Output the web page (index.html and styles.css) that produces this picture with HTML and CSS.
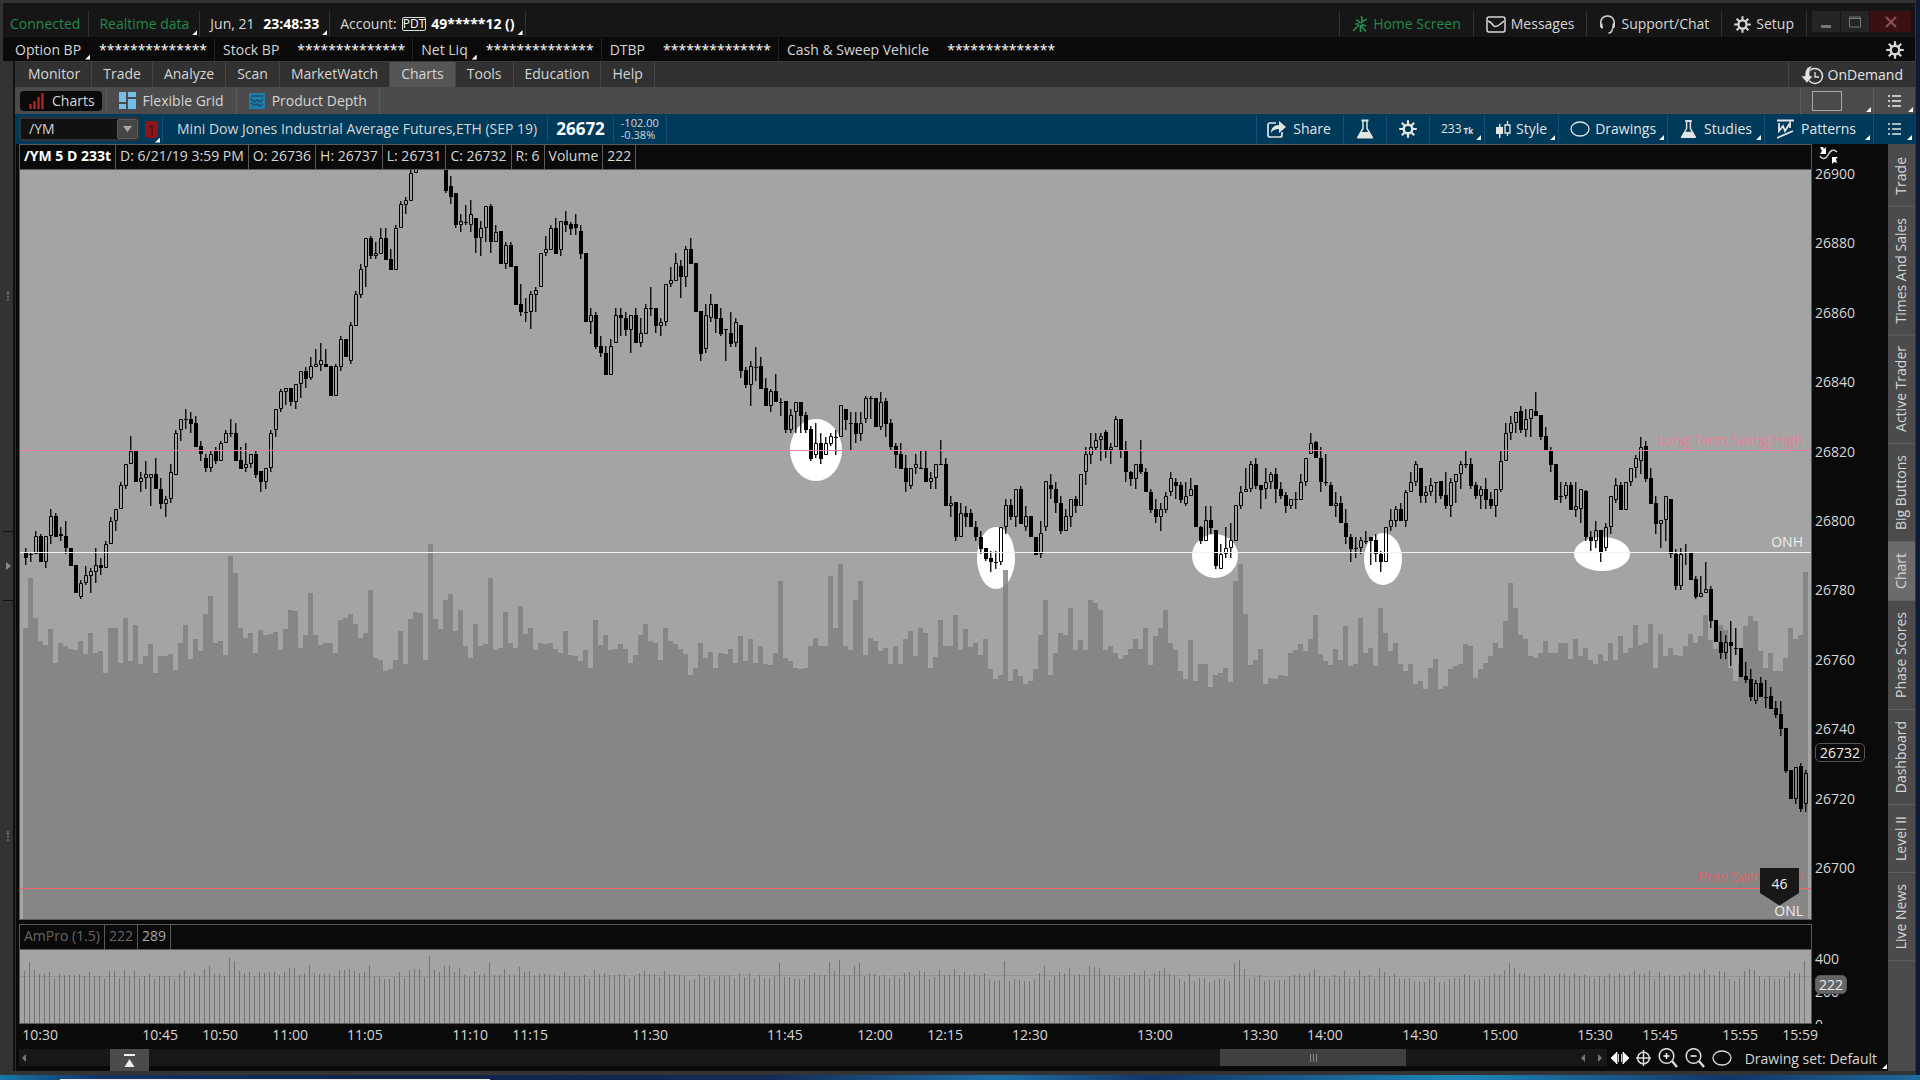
FILE: index.html
```html
<!DOCTYPE html>
<html lang="en">
<head>
<meta charset="utf-8">
<title>Charts - /YM</title>
<link rel="stylesheet" href="styles.css">
</head>
<body>
<svg class="defs" aria-hidden="true">
  <symbol id="i-gear" viewBox="0 0 18 18"><circle cx="9" cy="9" r="4.300" fill="none" stroke="currentColor" stroke-width="2.400"/><path d="M9 .2v4M9 13.800v4M.2 9h4M13.800 9h4M2.800 2.800l3 3M12.200 12.200l3 3M15.200 2.800l-3 3M5.800 12.200l-3 3" stroke="currentColor" stroke-width="2.200"/></symbol>
  <symbol id="i-flask" viewBox="0 0 18 20"><path d="M5.500.500h7v2h-7z" fill="currentColor"/><path d="M7 2v7.500L2 18h14L11 9.500V2" fill="none" stroke="currentColor" stroke-width="1.500"/><path d="M5 13h8l4 6.500H1z" fill="currentColor"/></symbol>
  <symbol id="i-list" viewBox="0 0 13 14"><path d="M4 2h9M4 7h9M4 12h9M0 2h2M0 7h2M0 12h2" stroke="currentColor" stroke-width="1.500"/></symbol>
  <symbol id="i-oval" viewBox="0 0 20 16"><ellipse cx="10" cy="8" rx="9" ry="7" fill="none" stroke="currentColor" stroke-width="1.300"/></symbol>
</svg>

<div class="window">
  <header class="title-bar">
    <div class="cell info first green">Connected</div>
    <div class="cell info green">Realtime data<i class="tri"></i></div>
    <div class="cell info">Jun, 21&nbsp; <b>23:48:33</b><i class="tri"></i></div>
    <div class="cell info">Account: <span class="pdt">PDT</span> <b>49*****12 ()</b><i class="tri"></i></div>
    <span class="grow"></span>
    <button class="cell line-left green"><svg width="16" height="18" viewBox="0 0 16 18"><path d="M9 1c1.500 2 1 5 .5 7M9 8.500c2-3 4-4 6-4M8 8C7 6 6 5 4 5M9.500 9.500l4.500 1.500M9 10.500l5 6M8.500 10v7M7 10l-6 6M7 9H3" fill="none" stroke="currentColor" stroke-width="1.700"/></svg>Home Screen</button>
    <button class="cell"><svg width="20" height="17" viewBox="0 0 20 17"><rect x="1" y="1" width="18" height="15" rx="2" fill="none" stroke="currentColor" stroke-width="1.500"/><path d="M2 5q3 1 5 4t6 0 5-4" fill="none" stroke="currentColor" stroke-width="1.500"/></svg>Messages</button>
    <button class="cell"><svg width="17" height="19" viewBox="0 0 17 19"><path d="M3.500 13C0 8 2 1 8.500 1s8.500 7 5 12.500M13.500 14q-1 4-4 4" fill="none" stroke="currentColor" stroke-width="1.500"/><path d="M1.500 8.500h2v5h-1l-1.500-2zM15.500 8.500h-2v5h1l1.500-2z" fill="currentColor"/></svg>Support/Chat</button>
    <button class="cell"><svg width="17" height="17"><use href="#i-gear"/></svg>Setup</button>
    <div class="win-buttons">
      <button aria-label="Minimize"><svg width="10" height="12"><path d="M0 10.500h10" stroke="#777" stroke-width="3"/></svg></button>
      <button aria-label="Maximize"><svg width="12" height="12"><path d="M.5 1h11v10H.5z M0 2.500h12" fill="none" stroke="#777"/></svg></button>
      <button class="close" aria-label="Close"><svg width="12" height="12"><path d="M1 1l10 10M11 1L1 11" stroke="#8b5555" stroke-width="2"/></svg></button>
    </div>
  </header>

  <div class="balances">
    <dl><dt>Option BP<i class="tri"></i></dt><dd>**************</dd></dl>
    <dl><dt>Stock BP</dt><dd>**************</dd></dl>
    <dl><dt>Net Liq<i class="tri"></i></dt><dd>**************</dd></dl>
    <dl><dt>DTBP</dt><dd>**************</dd></dl>
    <dl><dt>Cash &amp; Sweep Vehicle</dt><dd>**************</dd></dl>
    <span class="grow"></span>
    <button class="gear" aria-label="Settings"><svg width="18" height="18"><use href="#i-gear"/></svg></button>
  </div>

  <div class="shell">
    <aside class="gutter"><span>⁞</span><span class="mid"><svg width="5" height="8"><path d="M0 0l5 4-5 4z" fill="#8a8a8a"/></svg></span><span>⁞</span></aside>
    <div class="inner">
      <nav class="menu">
        <a href="#">Monitor</a><a href="#">Trade</a><a href="#">Analyze</a><a href="#">Scan</a><a href="#">MarketWatch</a><a href="#" class="on">Charts</a><a href="#">Tools</a><a href="#">Education</a><a href="#">Help</a>
        <span class="grow"></span>
        <a href="#" class="demand"><svg width="23" height="20" viewBox="0 0 23 20"><circle cx="14" cy="11" r="7.500" fill="none" stroke="currentColor" stroke-width="1.500"/><path d="M14 7v5h4" fill="none" stroke="currentColor" stroke-width="1.300"/><path d="M12 1C6 1 4 5 4 11H0l6 7 6-7H9C8 7 9 3 12 1z" fill="currentColor" stroke="#313131" stroke-width=".6"/></svg>OnDemand</a>
      </nav>

      <nav class="subtabs">
        <a href="#" class="pill"><svg width="16" height="16"><path d="M1.500 11v5M5.500 8v8M9.500 4v12M13.500 0v16" stroke="#b22a2a" stroke-width="2.200"/></svg>Charts</a>
        <a href="#"><svg width="17" height="17"><path d="M0 0h7v10H0zM9 0h8v5H9zM0 12h7v5H0zM9 7h8v10H9z" fill="#76bdea"/></svg>Flexible Grid</a>
        <a href="#"><svg width="16" height="16"><path d="M0 0h16v16H0z" fill="#1c7db0"/><path d="M2 3h12M2 6l3 3 3-2 3 2 3-3M2 10l3 2 3-1 3 2 3-2" fill="none" stroke="#234a60" stroke-width="1.500"/></svg>Product Depth</a>
        <span class="grow"></span>
        <button class="layout" aria-label="Grid layout"><span></span><i class="tri"></i></button>
        <button class="listbtn" aria-label="Menu"><svg width="13" height="14"><use href="#i-list"/></svg><i class="tri"></i></button>
      </nav>

      <div class="symbol-bar">
        <div class="combo"><input type="text" value="/YM" aria-label="Symbol"><button aria-label="Symbol list"><svg width="9" height="6"><path d="M0 0h9L4.500 6z" fill="#aaa"/></svg></button></div>
        <button class="link">1<i class="tri"></i></button>
        <div class="name">Mini Dow Jones Industrial Average Futures,ETH (SEP 19)</div>
        <div class="last">26672</div>
        <div class="change"><span>-102.00</span><span>-0.38%</span></div>
        <span class="grow"></span>
        <button class="tool share"><svg width="19" height="18" viewBox="0 0 19 18"><path d="M9 3H3a2 2 0 0 0-2 2v10a2 2 0 0 0 2 2h10a2 2 0 0 0 2-2v-3" fill="none" stroke="currentColor" stroke-width="1.700"/><path d="M4 13c0-5 3-8 8-8V1l7 6-7 6V9c-4 0-6 1-8 4z" fill="currentColor"/></svg>Share</button>
        <button class="tool" aria-label="Edit studies"><svg width="18" height="20"><use href="#i-flask"/></svg></button>
        <button class="tool" aria-label="Chart settings"><svg width="18" height="18"><use href="#i-gear"/></svg></button>
        <button class="tool ticks">233<small>Tk</small><i class="tri"></i></button>
        <button class="tool tight"><svg width="15" height="17" viewBox="0 0 15 17"><path d="M0 6h7v7H0zM3 3h1.500v14H3z" fill="currentColor"/><path d="M9 4h5v8H9zM11.500 0v4M11.500 12v3" fill="none" stroke="currentColor" stroke-width="1.300"/></svg>Style<i class="tri"></i></button>
        <button class="tool tight"><svg width="20" height="16"><use href="#i-oval"/></svg>Drawings<i class="tri"></i></button>
        <button class="tool"><svg width="17" height="20"><use href="#i-flask"/></svg>Studies<i class="tri"></i></button>
        <button class="tool patterns"><svg width="17" height="20" viewBox="0 0 17 20"><path d="M0 1.500h17" stroke="currentColor" stroke-width="2"/><path d="M2 4v8l4-5 2 5 5-8v5M0 19l16-7" fill="none" stroke="currentColor" stroke-width="1.800"/></svg>Patterns<i class="tri"></i></button>
        <button class="tool listbtn" aria-label="Menu"><svg width="13" height="14"><use href="#i-list"/></svg><i class="tri"></i></button>
      </div>

      <div class="work">
        <main class="charts">
          <section class="pane upper">
            <div class="frame">
              <div class="readout"><b>/YM 5 D 233t</b><span>D: 6/21/19 3:59 PM</span><span>O: 26736</span><span>H: 26737</span><span>L: 26731</span><span>C: 26732</span><span>R: 6</span><span>Volume</span><span>222</span></div>
              <div class="plot">
                <svg id="price" viewBox="20 170 1791 749" preserveAspectRatio="none"></svg>
                <span class="label high">Long Term Swing High</span>
                <span class="label onh">ONH</span>
                <span class="label prev">Prev Swing High</span>
                <span class="label onl">ONL</span>
                <span class="flag">46</span>
              </div>
            </div>
            <div class="axis">
              <svg width="19" height="20" viewBox="0 0 19 20"><path d="M1 12c2 4 6 3 8-1s5-7 9-3" fill="none" stroke="#ddd" stroke-width="1.400"/><path d="M1 3l3 0 1 2 2-2v7H1l2-3zM18 19l-3-1-2 2v-7h6l-2 2z" fill="#fff"/></svg>
              <ol><li>26900</li><li>26880</li><li>26860</li><li>26840</li><li>26820</li><li>26800</li><li>26780</li><li>26760</li><li>26740</li><li>26720</li><li>26700</li></ol>
              <span class="tag price-tag">26732</span>
            </div>
          </section>

          <section class="pane lower">
            <div class="frame">
              <div class="readout dim"><span>AmPro (1.5)</span><span>222</span><span class="lit">289</span></div>
              <div class="plot"><svg id="volume" viewBox="20 950 1791 73" preserveAspectRatio="none"></svg></div>
            </div>
            <div class="axis small-axis"><ol><li>400</li><li>200</li><li>0</li></ol><span class="tag vol-tag">222</span></div>
          </section>

          <div class="times" id="times"></div>

          <footer class="scroll">
            <div class="track">
              <svg class="arrow" width="4" height="8"><path d="M4 0v8L0 4z" fill="#777"/></svg>
              <button class="expand" aria-label="Expand"><svg width="11" height="15"><path d="M0 1h11v2H0zM5.500 6l5 8H.5z" fill="#eee"/></svg></button>
              <span class="gap-a"></span>
              <span class="thumb"><svg width="7" height="8"><path d="M.5 0v8M3.500 0v8M6.500 0v8" stroke="#888"/></svg></span>
              <span class="gap-b"></span>
              <svg width="21" height="8"><path d="M4 0v8L0 4zM17 0v8l4-4z" fill="#777"/></svg>
            </div>
            <div class="icons">
              <button aria-label="Fit width"><svg width="18" height="14"><path d="M6 1v12L0 7zM12 1v12l6-6zM7.500 3v8M10.500 3v8" fill="#fff" stroke="#fff" stroke-width=".8"/></svg></button>
              <button aria-label="Crosshair"><svg width="15" height="16"><path d="M7.500 0v16M0 8h15" stroke="#ddd" stroke-width="1.500"/><circle cx="7.500" cy="8" r="5.800" fill="none" stroke="#ddd" stroke-width="1.500"/></svg></button>
              <button aria-label="Zoom in"><svg width="20" height="20"><circle cx="8.500" cy="8" r="7.300" fill="none" stroke="#ddd" stroke-width="1.500"/><path d="M14 13l5 6" stroke="#ddd" stroke-width="2.400"/><path d="M5.500 8h6M8.500 5v6" stroke="#fff" stroke-width="1.500"/></svg></button>
              <button aria-label="Zoom out"><svg width="20" height="20"><circle cx="8.500" cy="8" r="7.300" fill="none" stroke="#ddd" stroke-width="1.500"/><path d="M14 13l5 6" stroke="#ddd" stroke-width="2.400"/><path d="M5.500 8h6" stroke="#fff" stroke-width="1.500"/></svg></button>
              <button aria-label="Ellipse"><svg width="20" height="16"><use href="#i-oval"/></svg></button>
            </div>
            <button class="drawing-set">Drawing set: Default<i class="tri"></i></button>
          </footer>
        </main>

        <nav class="side"><a href="#">Trade</a><a href="#">Times And Sales</a><a href="#">Active Trader</a><a href="#">Big Buttons</a><a href="#" class="on">Chart</a><a href="#">Phase Scores</a><a href="#">Dashboard</a><a href="#">Level II</a><a href="#">Live News</a></nav>
      </div>
    </div>
  </div>
</div>
<div class="desktop"></div>
<script src="chart.js"></script>
</body>
</html>
```
FILE: styles.css
```css
* { box-sizing: border-box; }
body {
  margin: 0;
  height: 100vh;
  min-height: 600px;
  display: flex;
  flex-direction: column;
  background: #0c1c38;
  color: #d6d6d6;
  font: 14px/20px "Open Sans", "Noto Sans", sans-serif;
  white-space: nowrap;
  overflow: hidden;
}
button, input { font: inherit; color: inherit; background: none; border: 0; padding: 0; margin: 0; }
a { color: inherit; text-decoration: none; }
svg { flex: none; display: block; }
.defs { position: absolute; width: 0; height: 0; }
.grow { flex: 1; }
b { color: #fff; }
.tri {
  position: absolute;
  right: 2px;
  bottom: 2px;
  width: 5px;
  height: 5px;
  background: #fff;
  clip-path: polygon(100% 0, 100% 100%, 0 100%);
}

.window {
  flex: 1;
  min-height: 0;
  display: flex;
  flex-direction: column;
  margin-right: 4px;
  background: #161616;
  border: solid #333;
  border-width: 3px 1px 4px 3px;
}

.title-bar { display: flex; height: 34px; padding-top: 8px; background: #161616; }
.cell {
  position: relative;
  display: flex;
  align-items: center;
  gap: 5px;
  padding: 0 12px;
  border-right: 1px solid #333;
}
.cell.info { padding: 0 10px; }
.cell.first { padding: 0 8px 0 7px; }
.cell.line-left { border-left: 1px solid #333; }
.green { color: #23894f; }
.pdt { border: 1px solid #ddd; border-radius: 2px; font-size: 12px; line-height: 12px; color: #fff; }
.win-buttons { display: flex; gap: 1px; padding: 0 4px 5px 5px; }
.win-buttons button { width: 28px; background: #252525; display: flex; align-items: center; justify-content: center; }
.win-buttons .close { width: 41px; background: #3a1012; }

.balances { display: flex; height: 24px; background: #0a0a0a; padding: 1px 0 0 4px; }
dl { display: flex; align-items: center; margin: 0; padding: 0 7px 0 8px; border-right: 1px solid #222; gap: 18px; }
dl:nth-of-type(5) { border: 0; }
dt { position: relative; }
dt .tri { right: -9px; bottom: 0; }
dd { margin: 0; color: #fff; }
.gear { width: 24px; margin-right: 5px; }

.shell { flex: 1; min-height: 0; display: flex; }
.gutter {
  width: 12px;
  background: #333;
  border-right: 2px solid #111;
  display: flex;
  flex-direction: column;
  color: #777;
}
.gutter span { flex: 1; display: flex; align-items: center; justify-content: center; }
.gutter .mid { flex: 0 0 70px; border: solid #111; border-width: 1px 0; }
.inner { flex: 1; min-width: 0; display: flex; flex-direction: column; }

.menu { display: flex; height: 26px; background: #313131; border-top: 1px solid #3a3a3a; padding-left: 2px; }
.menu a { padding: 2px 11px; border-right: 1px solid #454545; }
.menu .on { background: #555; }
.menu .demand { display: flex; align-items: center; gap: 4px; padding: 0 12px; border: 0; border-left: 1px solid #454545; color: #e4e4e4; }

.subtabs { display: flex; height: 27px; background: #4b4b4b; align-items: center; padding-left: 5px; }
.subtabs a { display: flex; align-items: center; gap: 7px; height: 27px; padding: 0 12px; border-right: 1px solid #5c5c5c; }
.subtabs .pill { height: 20px; padding: 0 7px 0 9px; margin-right: 4px; border: 0; border-radius: 4px; background: #0a0a0a; }
.subtabs .pill + a { border-left: 1px solid #5c5c5c; }
.layout { position: relative; width: 73px; height: 27px; border-left: 1px solid #5c5c5c; padding-left: 11px; }
.layout span { display: block; width: 30px; height: 20px; border: 1px solid #aaa; }
.listbtn { position: relative; width: 42px; height: 27px; border-left: 1px solid #5c5c5c; padding-left: 14px; color: #eee; }

.symbol-bar { display: flex; height: 30px; background: #003a5a; align-items: center; padding-left: 4px; }
.combo { display: flex; width: 121px; height: 24px; background: #111; border: 2px solid #333; border-radius: 3px; }
.combo input { flex: 1; width: 60px; padding-left: 8px; outline: 0; }
.combo button { width: 21px; background: #454545; border: 1px solid #5a5a5a; border-radius: 2px; display: flex; align-items: center; justify-content: center; }
.link { position: relative; width: 13px; height: 17px; margin: 0 4px 0 5px; border-radius: 3px; background: #8c1519; color: #3a1012; line-height: 17px; }
.link .tri { right: -2px; bottom: -5px; }
.name { padding: 3px 10px 3px 14px; border: solid #14507a; border-width: 0 1px; }
.last { padding: 3px 8px; font-size: 17px; font-weight: bold; color: #fff; border-right: 1px solid #14507a; }
.change { display: flex; flex-direction: column; padding: 2px 7px; font-size: 11px; line-height: 12px; border-right: 1px solid #14507a; }
.tool { position: relative; display: flex; align-items: center; gap: 7px; height: 28px; padding: 0 12px; border-left: 1px solid #14507a; color: #e4e4e4; }
.tool .tri { right: 3px; bottom: 3px; }
.tool.share { padding: 0 12px 0 10px; }
.tool.tight { gap: 5px; padding: 0 11px; }
.tool.patterns { padding: 0 17px 0 12px; }
.tool.ticks { gap: 2px; font-size: 12px; padding: 0 11px; }
.ticks small { font-size: 8px; font-weight: bold; padding-top: 3px; }
.tool.listbtn { padding-left: 14px; }

.work { flex: 1; min-height: 0; display: flex; border-left: 1px solid #003a5a; background: #0a0a0a; }
.charts { flex: 1; min-width: 0; display: flex; flex-direction: column; padding-left: 3px; }
.pane { display: flex; }
.upper { flex: 1; min-height: 0; }
.lower { height: 100px; margin-top: 4px; }
.frame { flex: 1; min-width: 0; display: flex; flex-direction: column; border: 1px solid #5a5a5a; }
.readout { display: flex; height: 25px; border-bottom: 1px solid #5a5a5a; }
.readout > * { padding: 1px 4px; border-right: 1px solid #5a5a5a; }
.dim { color: #666; }
.lit { color: #a8a8a8; }
.plot { position: relative; flex: 1; min-height: 0; background: #a4a4a4; }
.plot > svg { width: 100%; height: 100%; }
.volume { fill: #7e7e7e; fill-opacity: .8; }
.body-up { fill: none; stroke: #000; }
.label { position: absolute; right: 8px; transform: translateY(-50%); }
.high { top: 36%; color: #e87f97; }
.onh { top: 50%; color: #eee; margin-top: -3px; }
.prev { top: 94%; color: #e0656a; margin-top: 3px; }
.onl { top: 99%; color: #eee; margin-top: -1px; }
.flag {
  position: absolute;
  right: 12px;
  top: 93%;
  width: 39px;
  height: 38px;
  margin-top: 1px;
  padding: 6px 0;
  text-align: center;
  color: #eee;
  background: #181818;
  clip-path: polygon(0 0, 100% 0, 100% 67%, 50% 100%, 0 67%);
}
.axis { position: relative; width: 76px; padding-left: 3px; display: flex; flex-direction: column; }
.axis > svg { margin-left: 4px; }
.axis ol { list-style: none; margin: 0; padding: 0; flex: 1; display: flex; flex-direction: column; justify-content: space-between; }
.upper ol { margin-bottom: 42px; }
.tag { position: absolute; left: 3px; padding: 0 4px; line-height: 17px; border: 1px solid #555; border-radius: 5px; background: #0a0a0a; color: #eee; }
.price-tag { top: 78%; margin-top: -6px; }
.small-axis { overflow: hidden; padding-top: 25px; }
.small-axis ol { margin-bottom: -11px; }
.vol-tag { top: 51px; background: #666; padding: 0 3px; }

.times { position: relative; height: 25px; margin: 0 77px 0 1px; }
.times span { position: absolute; top: 1px; transform: translateX(-50%); }

.scroll { display: flex; height: 22px; }
.track { flex: 1; height: 17px; display: flex; align-items: center; background: #181818; padding: 0 5px 0 3px; }
.expand { width: 39px; height: 22px; margin: 0 0 -5px 84px; background: #4b4b4b; display: flex; align-items: center; justify-content: center; }
.gap-a { flex: 1069; }
.thumb { flex: 186; height: 17px; background: #404040; display: flex; align-items: center; justify-content: center; }
.gap-b { flex: 174; }
.icons { display: flex; align-items: center; gap: 7px; padding-left: 4px; height: 18px; color: #ddd; }
.drawing-set { position: relative; padding: 0 11px 0 13px; height: 20px; line-height: 18px; }
.drawing-set .tri { right: 1px; bottom: 0; }

.side { width: 27px; background: #4b4b4b; display: flex; flex-direction: column; padding-top: 2px; }
.side a { writing-mode: vertical-rl; transform: rotate(180deg); line-height: 26px; padding: 11px 0; border-top: 1px solid #626262; }
.side .on { background: #6b6b6b; }

.desktop { height: 5px; background: linear-gradient(90deg, transparent 60px, #eee 60px 490px, transparent 490px) 0 4px / 100% 1px no-repeat, linear-gradient(90deg, #1677a8, #123468 5%, #0f2347 20%, #142a55 40%, #1c6fa8 52%, #123468 60%, #1d86b8 76%, #123468 90%, #1d6a9c); }
```
FILE: chart.js
```js
// Each run of candles: top offset, vertical units per pixel, then high,bodyTop,bodyBottom,low + up/down.
const runs = [
[160, 2.8, `1087,1101,1115,1135d 1097,1104,1104,1125d 1038,1053,1104,1104u 1047,1053,1126,1126d 1053,1053,1126,1142u 978,998,1053,1076u 988,998,1055,1055d 1028,1046,1054,1066d 1010,1054,1087,1102d 1086,1086,1136,1136d
1135,1135,1213,1213d 1175,1184,1224,1230u 1136,1163,1185,1191u 1142,1152,1164,1212u 1087,1135,1153,1184u 1115,1134,1143,1163d 1066,1076,1143,1143u 999,1010,1076,1076u 978,978,1010,1038u 902,911,978,978u
852,852,912,921u 774,815,852,852u 815,815,902,902d 874,890,902,930u 842,880,891,921u 880,880,891,968u 834,880,922,922d 891,921,962,978d 940,950,962,999u 852,873,950,960u
755,765,881,881u 726,726,755,786u 698,726,726,754d 706,725,738,764d 716,736,804,804d 786,802,824,842d 824,833,863,874d 815,824,863,873u 804,815,844,850d 786,793,843,843u
755,765,793,793u 726,765,765,776d 736,765,843,843d 804,841,864,864d 793,852,863,873u 824,824,852,863u 815,824,881,890d 872,872,902,930d 863,863,902,922u 755,765,863,873u
698,698,755,775u 640,648,698,706u 638,638,650,687u 638,638,678,688d 628,628,678,698u 590,590,628,667u 580,590,612,638d 552,578,611,617u 530,571,579,579u 513,561,573,590u
530,572,580,580d 578,578,660,660d 572,578,660,660u 492,501,579,590u 501,501,552,552d 454,463,562,571u 367,376,464,464u 290,305,377,386u 219,219,300,355u 212,218,269,278d
230,261,269,278u 190,219,262,262u 190,218,279,279d 250,278,307,307d 181,190,307,307u 115,124,191,191u 104,113,125,151u 28,37,114,114u -20,0,37,37u -60,-60,0,0u
-80,-80,-30,-30u -80,-80,-30,-30d -80,-80,-30,-30u -60,-60,0,0d 0,0,87,92d 44,74,104,124d 91,91,182,191d 151,172,181,201u 125,173,173,181d 113,152,181,201u
162,162,219,260d 172,190,219,268u 130,130,191,230u 123,130,230,260d 181,201,230,230u 200,200,290,290d 230,239,290,305u 230,239,300,300d 298,298,405,405d 348,403,426,436d
386,425,425,453d 367,376,426,473u 356,365,377,425u 260,260,355,355u 212,250,261,268u 181,190,251,251u 162,190,262,262d 172,172,251,268u 142,172,181,201d 173,178,192,210d
152,179,191,210d 181,200,262,278d 260,260,454,454d 415,435,454,486u 425,435,523,530d 492,522,541,552d 522,540,601,601d 502,522,601,601u 415,435,513,513u 415,434,443,492d
425,442,475,492d 435,435,475,540u 415,435,513,513d 443,485,513,523u 404,414,486,486u 355,415,415,436d 415,415,464,483d 443,453,464,492u 348,348,454,464u 299,337,348,355u
261,289,338,338u 280,298,328,386d 240,249,327,355u 219,249,290,290d 288,288,426,426d 424,424,542,562d 404,435,530,540u 376,404,443,453u 403,403,444,484d 415,442,486,492d
474,474,474,562d 425,484,514,523d 443,453,513,523u 463,463,590,610d 580,588,630,638d 562,578,629,688u 523,579,579,618d 552,578,640,640d 610,638,688,688d 640,648,688,706u
600,648,678,678d 667,678,678,716d 676,676,755,765d 698,715,755,765u 677,677,706,765u 677,677,716,763d 706,714,756,763d 745,753,836,842d 736,793,825,834u 765,792,836,852d
775,793,825,825u 765,774,794,802u 755,775,775,825d 687,687,775,775u 696,696,727,755d 706,737,737,813d 706,736,766,792d 706,736,766,786u 660,667,726,736u 660,667,667,726d
665,665,748,748d 649,677,748,755u 667,676,738,775d 726,735,804,813d 793,802,825,862d 793,823,864,864d 825,862,902,930d 862,862,912,921u 824,852,862,880u 815,862,862,862d
815,862,902,902d 873,890,902,921u 852,852,890,921u`],
[380, 3, `181,253,253,253d 235,252,378,378d 347,369,377,410u 367,367,472,482d 369,399,472,472u 378,398,412,441d 388,398,442,442d 422,440,472,482d 452,470,506,523d 503,503,536,544d
514,534,546,576d 514,546,546,566d 440,440,546,556u 358,376,442,462u 358,375,412,420d 327,327,410,441u 317,327,431,431d 378,409,442,452u 408,408,472,472d 470,470,524,524d
422,458,523,535u 304,304,440,452u 283,315,328,358d 306,327,370,398d 347,368,453,462d 388,409,452,452u 358,358,410,440u 347,357,378,398d 283,283,378,378u 202,223,276,316u
160,200,224,253u 160,181,203,210u 160,169,181,242u 150,157,213,235d 190,201,211,253u 107,118,202,202u 116,116,213,235d 182,212,276,306d 274,275,296,317d 253,253,296,327u
181,252,277,283d 265,275,337,337d 327,335,390,398d 358,388,412,430d 368,388,412,452u 337,347,389,398u 275,294,337,347u 294,305,318,357d 306,316,360,368d 305,347,371,377u
294,326,347,347u 316,316,442,442d 438,440,484,493d 377,420,482,482u 377,420,444,462d 451,451,558,566d 493,523,566,566u 441,504,523,535u 430,480,504,535u 376,376,482,482u
317,335,377,388u 265,327,335,335u 243,253,328,335u 235,252,318,327d 316,316,329,388d 265,306,328,358u 275,283,307,327u 265,282,328,368d 307,327,347,358d 335,346,378,398d
358,358,378,388u 336,358,358,388d 283,305,359,359u 234,234,307,317u 158,188,223,223u 182,187,235,235d 202,233,307,335d 223,306,306,317d 307,316,378,378d 335,368,378,410u
347,368,430,430d 388,428,472,493d 462,470,506,546d 470,505,505,535d 470,481,505,523u 452,482,482,493d 470,470,483,556d 462,480,523,546d 513,523,546,576d 440,440,546,546u
388,420,441,452u 377,388,422,440u 368,387,423,423d 329,335,422,440u 276,305,336,336u 243,253,305,317u 263,263,347,368d 317,335,347,368u 294,316,337,347u 305,305,305,368d
304,304,347,358d 275,345,378,388d 295,305,378,410u 283,283,307,368u 243,253,283,327u 212,253,253,264d 235,252,318,327d 307,316,348,357d 317,327,347,388u 294,327,360,388d
337,358,378,388d 327,327,378,410u 212,242,329,335u 128,159,242,242u 108,129,159,181u 95,95,130,158u 77,94,150,158d 88,118,150,170u 88,88,118,170u 36,94,108,108d
106,106,171,181d 140,168,212,212d 202,212,254,275d 252,252,359,359d 306,347,347,368d 305,316,347,358u 306,316,390,390d 307,377,389,410u 328,328,388,430u 329,334,472,482d
452,470,483,514d 422,451,482,504u 451,451,518,546d 430,440,505,514u 347,347,441,462u 294,316,359,368u 306,316,389,389d 307,307,389,389u 264,264,307,318u 224,235,265,293u
171,200,242,283u 182,199,296,306d 264,293,371,371d 347,368,431,462d 420,421,431,504u 347,347,421,482u 357,357,523,535d 506,521,619,629d 504,523,617,629u 493,516,516,556d
515,515,599,599d 588,597,652,658d 588,639,651,651u 546,627,640,640u 618,627,723,744d 721,721,787,787d 753,786,818,838d 764,786,818,838u 722,785,797,857d 744,805,805,826d
803,803,892,892d 846,889,900,909d 868,897,952,962d 899,909,962,972u 891,908,952,952d 899,951,951,984d 921,949,986,986d 962,983,1005,1014d 962,1002,1046,1067d 1043,1043,1173,1178d
1171,1171,1256,1256d 1160,1160,1256,1273u 1150,1159,1286,1295d 1170,1179,1273,1295u`]
];

// Volume bar tops, one per candle.
const volumeRuns = [
[160, 2.8, `1309 1169 1281 1348 1358 1313 1408 1352 1362 1369 1372 1348 1383 1324 1379 1376 1436 1309 1309 1408 1281 1404 1303 1411 1390 1355 1436 1390 1390 1383 1429 1352 1303 1397 1341 1376 1270 1222 1352 1348
1387 1110 1155 1309 1338 1324 1380 1317 1330 1327 1321 1373 1313 1261 1264 1366 1331 1211 1331 1359 1352 1352 1380 1289 1282 1271 1299 1338 1324 1205 1393 1401 1432 1425 1401 1320 1411 1285 1265 1268
1401 1075 1285 1313 1233 1215 1320 1261 1362 1393 1299 1362 1355 1169 1372 1366 1265 1352 1366 1250 1327 1309 1372 1352 1355 1352 1369 1380 1320 1387 1390 1404 1373 1421 1289 1358 1331 1373 1369 1355
1369 1408 1387 1331 1299 1348 1352 1401 1309 1348 1355 1369 1383 1442 1421 1352 1393 1377 1421 1380 1383 1369 1408 1334 1404 1341 1408 1362 1411 1414 1380 1180 1393 1404 1421 1425 1421 1362 1338 1362
1362 1166 1309 1131 1362 1373 1233 1180 1387 1338 1348 1376 1366 1411 1362 1411 1341 1320 1390 1309`],
[380, 3, `758 863 832 720 799 799 705 810 747 802 788 825 777 867 896 885 570 904 867 889 911 904 867 766 660 885 818 758 766 683 810 780 810 660 668 690 810 799 818
837 825 807 777 807 743 855 769 743 690 788 810 874 896 780 904 852 852 922 885 878 863 907 604 552 702 855 840 807 911 893 896 885 889 818 810 792 813 777 705
821 844 855 807 840 739 859 851 713 818 803 859 683 758 814 788 852 874 852 911 904 926 863 837 926 919 867 859 852 792 799 893 867 848 829 788 803 724 608 683
766 777 829 833 818 784 818 818 788 788 837 777 829 803 840 852 822 844 788 840 769 818 803 735 795 788 732 863 762 829 803 825 829 799 762 788 769 705 780 806
735 750 863 904 852 739 709 724 814 863 818 874 874 833 743 777 766 577`]
];

const marks = [[816, 450, 26, 31], [996, 558, 19, 31], [1215, 556, 23, 22], [1383, 559, 19, 26], [1602, 554, 28, 17]];
const times = { "10:30": 40, "10:45": 160, "10:50": 220, "11:00": 290, "11:05": 365, "11:10": 470, "11:15": 530, "11:30": 650, "11:45": 785, "12:00": 875, "12:15": 945, "12:30": 1030, "13:00": 1155, "13:30": 1260, "14:00": 1325, "14:30": 1420, "15:00": 1500, "15:30": 1595, "15:45": 1660, "15:55": 1740, "15:59": 1800 };

const tops = volumeRuns.flatMap(([top, unit, text]) => text.split(/\s+/).map(v => Math.round(top + v / unit)));

let area = "M23 919";
tops.forEach((y, i) => { area += `V${y}H${28 + i * 5}`; });
area += "V919Z";

let solid = "", hollow = "", index = 0;
for (const [top, unit, text] of runs) {
  for (const item of text.split(/\s+/)) {
    const up = item.endsWith("u");
    const [h, a, b, l] = item.slice(0, -1).split(",").map(v => Math.round(top + v / unit));
    const x = 24 + index * 5;
    const rect = (rx, ry, w, y2) => `M${rx} ${ry}h${w}V${y2}h${-w}Z`;
    if (a > h) solid += rect(x + 1.1, h, 1.3, a);
    if (l > b) solid += rect(x + 1.1, b, 1.3, l);
    if (b - a < 1) solid += rect(x, a, 4, a + 1);
    else if (up && b - a > 2) hollow += rect(x + .5, a + .5, 3, b - .5);
    else solid += rect(x, a, 4, b);
    index++;
  }
}

document.getElementById("price").innerHTML =
  marks.map(([x, y, rx, ry]) => `<ellipse cx="${x}" cy="${y}" rx="${rx}" ry="${ry}" fill="#fff"/>`).join("") +
  `<path class="volume" d="${area}"/><path d="${solid}"/><path class="body-up" d="${hollow}"/>` +
  `<path d="M20 450.5H1811" stroke="#f5809c"/><path d="M20 552.5H1811" stroke="#f2f2f2"/><path d="M20 888.5H1811" stroke="#f06468"/>`;

document.getElementById("volume").innerHTML =
  `<path d="M20 976.5H600l20-1H1240l30 1H1811" stroke="#949494" fill="none"/><path stroke="#737373" d="${tops.map((y, i) => `M${24.5 + i * 5} 1024V${Math.round(971.3 - (627.5 - y) * .18)}`).join("")}"/>`;

document.getElementById("times").innerHTML = Object.entries(times)
  .map(([t, x]) => `<span style="left:${((x - 20) / 17.91).toFixed(2)}%">${t}</span>`).join("");
```
